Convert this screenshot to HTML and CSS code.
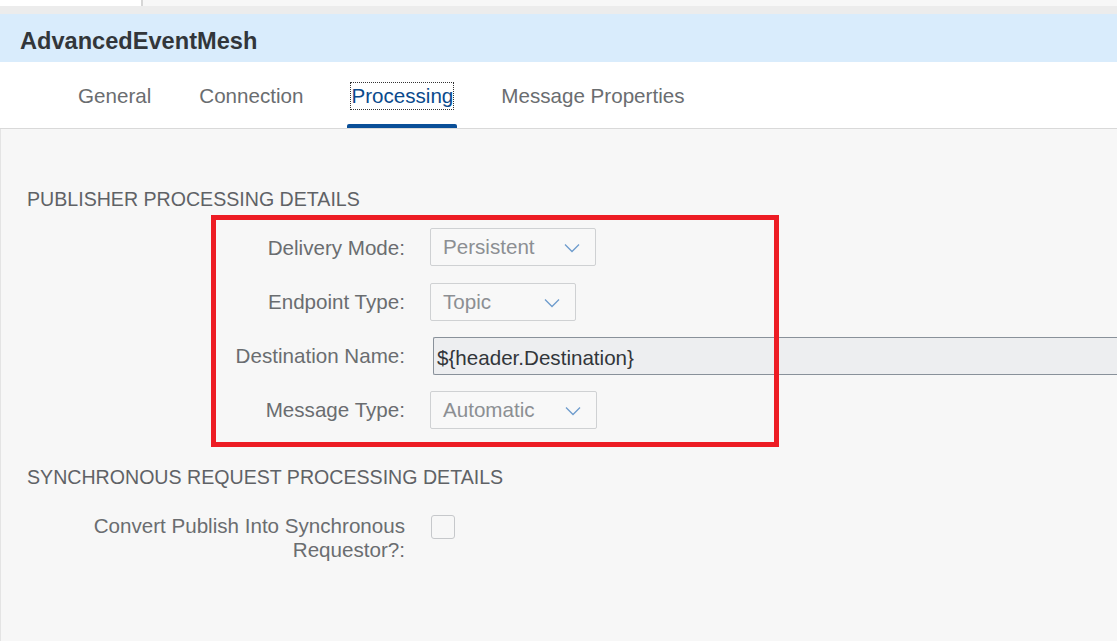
FILE: index.html
```html
<!DOCTYPE html>
<html lang="en">
<head>
<meta charset="utf-8">
<title>AdvancedEventMesh</title>
<link rel="stylesheet" href="styles.css">
</head>
<body>
<div class="page">
  <div class="topstrip">
    <div class="topstrip-left"></div>
    <div class="topstrip-right"></div>
  </div>
  <div class="band"></div>
  <div class="header"><h1 class="title">AdvancedEventMesh</h1></div>
  <nav class="tabs">
    <div class="tab">General</div>
    <div class="tab">Connection</div>
    <div class="tab tab-active"><span class="tab-focus">Processing</span></div>
    <div class="tab">Message Properties</div>
  </nav>
  <main class="content">
    <h2 class="section-title first">PUBLISHER PROCESSING DETAILS</h2>
    <div class="form">
      <label class="label">Delivery Mode:</label>
      <div class="field"><div class="select w166"><span>Persistent</span><svg class="chev" viewBox="0 0 16 10" width="16" height="10"><path d="M1 1.5 L8 8.5 L15 1.5" fill="none" stroke="#6e9ccd" stroke-width="1.3"/></svg></div></div>
      <label class="label">Endpoint Type:</label>
      <div class="field"><div class="select w146"><span>Topic</span><svg class="chev" viewBox="0 0 16 10" width="16" height="10"><path d="M1 1.5 L8 8.5 L15 1.5" fill="none" stroke="#6e9ccd" stroke-width="1.3"/></svg></div></div>
      <label class="label">Destination Name:</label>
      <div class="field"><div class="input">${header.Destination}</div></div>
      <label class="label">Message Type:</label>
      <div class="field"><div class="select w167"><span>Automatic</span><svg class="chev" viewBox="0 0 16 10" width="16" height="10"><path d="M1 1.5 L8 8.5 L15 1.5" fill="none" stroke="#6e9ccd" stroke-width="1.3"/></svg></div></div>
    </div>
    <h2 class="section-title second">SYNCHRONOUS REQUEST PROCESSING DETAILS</h2>
    <div class="form form-sync">
      <label class="label label-wrap">Convert Publish Into Synchronous Requestor?:</label>
      <div class="field field-top"><div class="checkbox"></div></div>
    </div>
    <div class="highlight"></div>
  </main>
</div>
</body>
</html>
```
FILE: styles.css
```css
html, body {
  margin: 0;
  padding: 0;
  width: 1117px;
  height: 641px;
  overflow: hidden;
  background: #f7f7f7;
  font-family: "Liberation Sans", Arial, sans-serif;
}

.page {
  display: flex;
  flex-direction: column;
  height: 641px;
}

.topstrip {
  display: flex;
  height: 6px;
}
.topstrip-left {
  width: 141px;
  background: #ffffff;
  border-right: 2px solid #d6d6d6;
}
.topstrip-right {
  flex: 1;
  background: #f7f7f7;
}

.band {
  height: 8px;
  background: #ececec;
}

.header {
  height: 48px;
  background: #d9ecfc;
  display: flex;
  align-items: center;
  padding-left: 20px;
}
.title {
  margin: 0;
  font-size: 23.6px;
  font-weight: bold;
  color: #32363a;
  line-height: 1;
  padding-top: 8px;
}

.tabs {
  background: #ffffff;
  border-bottom: 1px solid #d9d9d9;
  display: flex;
  align-items: stretch;
  padding-left: 74px;
  gap: 40px;
  box-sizing: border-box;
  height: 67px;
}
.tab {
  position: relative;
  padding: 2px 4px 0;
  display: flex;
  align-items: center;
  font-size: 20.6px;
  color: #6a6d70;
}
.tab-active {
  color: #0a4a8c;
}
.tab-active::after {
  content: "";
  position: absolute;
  left: 0;
  right: 0;
  bottom: 0;
  height: 4px;
  background: #0a4f98;
  border-radius: 2px 2px 0 0;
}
.tab-focus {
  outline: 1px dotted #333;
  outline-offset: 0;
  line-height: 26px;
}

.content {
  position: relative;
  flex: 1;
  border-left: 1px solid #e4e4e4;
  padding-left: 26px;
}

.section-title {
  margin: 0;
  font-size: 19.6px;
  font-weight: normal;
  color: #5f6266;
  line-height: 24px;
}
.section-title.first {
  margin-top: 58px;
}
.section-title.second {
  margin-top: 36px;
}

.form {
  display: grid;
  grid-template-columns: 378px 1fr;
  column-gap: 25px;
  row-gap: 16px;
  align-items: center;
  margin-top: 17px;
}
.form-sync {
  margin-top: 25px;
}

.label {
  text-align: right;
  font-size: 20.6px;
  color: #6a6d70;
  line-height: 24px;
}
.label-wrap {
  padding-left: 56px;
  align-self: start;
}

.field {
  display: flex;
  align-items: center;
}
.field-top {
  align-self: start;
}

.select {
  height: 38px;
  box-sizing: border-box;
  border: 1px solid #cfd1d3;
  border-radius: 2px;
  background: #f8f8f8;
  display: flex;
  align-items: center;
  justify-content: space-between;
  padding: 0 15px 0 12px;
  font-size: 20.6px;
  color: #8c8f93;
}
.w166 { width: 166px; margin-bottom: 1px; }
.w146 { width: 146px; }
.w167 { width: 167px; }

.chev {
  display: block;
  margin-top: 2px;
}

.input {
  margin-left: 3px;
  width: 720px;
  height: 38px;
  box-sizing: border-box;
  border: 1px solid #89919a;
  border-right: none;
  border-radius: 2px 0 0 2px;
  background: #edeef0;
  display: flex;
  align-items: center;
  padding-left: 3px;
  padding-top: 4px;
  font-size: 20.6px;
  color: #32363a;
}

.checkbox {
  margin-left: 1px;
  margin-top: 1px;
  width: 24px;
  height: 24px;
  box-sizing: border-box;
  border: 1px solid #c6c8cb;
  border-radius: 3px;
  background: #f7f7f7;
}

.highlight {
  position: absolute;
  left: 210px;
  top: 86px;
  width: 568px;
  height: 232px;
  box-sizing: border-box;
  border: 5px solid #ed1c24;
  pointer-events: none;
}
```
